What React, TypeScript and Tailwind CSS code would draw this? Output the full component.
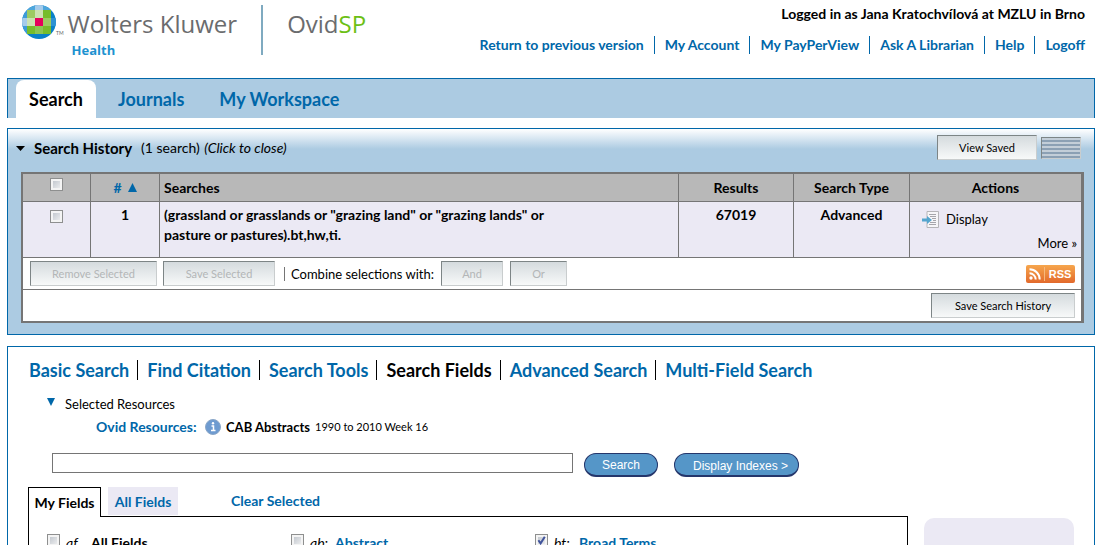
import type { ReactNode } from "react";

const accountLinks = ["Return to previous version", "My Account", "My PayPerView", "Ask A Librarian", "Help", "Logoff"];

const searchModes = ["Basic Search", "Find Citation", "Search Tools", "Search Fields", "Advanced Search", "Multi-Field Search"];

const fields = [
    { code: "af", sep: "", name: "All Fields", link: false, checked: false },
    { code: "ab", sep: ":", name: "Abstract", link: true, checked: false },
    { code: "bt", sep: ":", name: "Broad Terms", link: true, checked: true },
];

function Checkbox({ id, label, checked = false }: { id: string; label?: string; checked?: boolean }) {
    return (
        <span className="relative block size-[13px] shrink-0">
            <input
                id={id}
                type="checkbox"
                aria-label={label}
                defaultChecked={checked}
                className="peer block size-[13px] appearance-none border border-[#8e8f8f] bg-linear-to-br from-[#b9bfc7] to-[#f6f6f6] shadow-[inset_0_0_0_2px_#f4f4f4]"
            />
            <svg viewBox="0 0 13 13" className="pointer-events-none absolute inset-0 hidden size-[13px] peer-checked:block">
                <path d="M3.4 6.2 5.6 9.4 9.8 2.8" fill="none" stroke="#41549c" strokeWidth="2" />
            </svg>
        </span>
    );
}

function GreyButton({ children, className = "", disabled = false }: { children: ReactNode; className?: string; disabled?: boolean }) {
    return (
        <button
            type="button"
            disabled={disabled}
            className={`h-[25px] border border-t-[#7d8586] border-l-[#7d8586] border-r-[#c9cdce] border-b-[#c9cdce] bg-linear-to-b from-[#d5dbde] to-[#f7f9f9] text-[11px] leading-[14px] text-black disabled:text-[#b3b6b7] ${className}`}
        >
            {children}
        </button>
    );
}

function GlobeLogo() {
    return (
        <svg viewBox="0 0 34 34" className="size-[34px]" aria-hidden="true">
            <clipPath id="globe">
                <circle cx="17" cy="17" r="17" />
            </clipPath>
            <g clipPath="url(#globe)">
                <rect width="34" height="34" fill="#0a80c8" />
                <rect x="5" width="24" height="5" fill="#4da6dc" />
                <rect x="13" width="8" height="5" fill="#a5cbeb" />
                <rect y="5" width="5" height="24" fill="#3d9bd8" />
                <rect y="13" width="5" height="8" fill="#a5cbeb" />
                <rect x="29" y="13" width="5" height="8" fill="#2d92d3" />
                <rect x="5" y="5" width="24" height="24" fill="#76bd2b" />
                <rect x="5" y="5" width="8" height="8" fill="#9ccb62" />
                <rect x="13" y="5" width="8" height="8" fill="#cbe2b2" />
                <rect x="5" y="13" width="8" height="8" fill="#cbe2b2" />
                <rect x="21" y="13" width="8" height="8" fill="#9ccb62" />
                <rect x="13" y="21" width="8" height="8" fill="#8cc552" />
                <rect x="13" y="13" width="8" height="8" fill="#e5005b" />
            </g>
        </svg>
    );
}

function DisplayIcon() {
    return (
        <svg viewBox="0 0 17 17" className="size-[17px]" aria-hidden="true">
            <path d="M5 .5h11.500v16H5z" fill="#f6f6f8" stroke="#b5b5b8" />
            <path d="M7 3.500h7M8 5.500h6M10 7.500h4M11 9.500h3M8 11.500h6M7 13.500h7" stroke="#a6a6ab" />
            <path d="M0 7.500h5V5l5 4-5 4v-2.500H0z" fill="#54a5ce" />
        </svg>
    );
}

function RssBadge() {
    return (
        <a href="#" aria-label="RSS feed" className="flex h-[18px] w-[49px] items-center rounded-xs bg-linear-to-b from-[#f6a64d] to-[#e2692b] text-white">
            <svg viewBox="0 0 19 18" className="h-[18px] w-[19px]" aria-hidden="true">
                <circle cx="5" cy="13" r="1.700" fill="#fff" />
                <path d="M3.500 8.300a6.200 6.200 0 0 1 6.200 6.200M3.500 4.300a10.200 10.200 0 0 1 10.200 10.200" fill="none" stroke="#fff" strokeWidth="2" />
                <path d="M18.500 2v14" stroke="#f7b87c" />
            </svg>
            <span className="flex-1 text-center font-['Liberation_Sans'] text-[11px] leading-[18px] font-bold">RSS</span>
        </a>
    );
}

function Header() {
    return (
        <header className="flex h-[78px] shrink-0 justify-between pr-[10px] pl-[15px]">
            <div className="flex pt-[5px]">
                <GlobeLogo />
                <span className="mt-6 text-[5px] leading-[8px] text-[#666]">TM</span>
                <div className="pl-1">
                    <div className="font-['Open_Sans'] text-[24px] leading-[38px] text-[#6b6c6e]">Wolters Kluwer</div>
                    <div className="pl-1 font-['Open_Sans'] text-[13px] leading-[14px] font-bold text-[#1d92d0]">Health</div>
                </div>
                <div className="ml-6 h-[50px] w-[2px] bg-[#7faac0]" />
                <div className="ml-6 font-['Open_Sans'] text-[24px] leading-[38px] text-[#6b6c6e]">
                    Ovid<span className="text-[#6cc015]">SP</span>
                </div>
            </div>
            <div className="flex flex-col items-end pt-1 text-[14px] font-bold">
                <div className="leading-[20px]">Logged in as Jana Kratochvílová at MZLU in Brno</div>
                <nav className="mt-3 flex leading-[18px] text-[#0067a9]">
                    {accountLinks.map((link) => (
                        <a key={link} href="#" className="ml-[10px] border-l border-[#0067a9] pl-[10px] first:border-0">
                            {link}
                        </a>
                    ))}
                </nav>
            </div>
        </header>
    );
}

function SearchHistory() {
    const head = "h-7 border-b border-[#757575] bg-[#b8b8b8] text-[14px] font-bold";
    const cell = "h-14 border-b border-[#757575] bg-[#ebe9f4] align-top text-[14px] font-bold";

    return (
        <section className="mt-[10px] border border-[#0067a9] bg-[#accbe2] bg-linear-to-b from-white to-[#accbe2] to-[20px] pr-[10px] pb-[11px] pl-[13px]">
            <div className="flex h-[43px] items-start justify-between pt-[6px]">
                <div className="flex items-center gap-[9px] leading-[26px]">
                    <svg viewBox="0 0 9 5" className="-ml-[5px] h-[5px] w-[9px]" aria-hidden="true">
                        <path d="M0 0h9L4.500 5z" />
                    </svg>
                    <h2 className="text-[15px] font-bold">Search History</h2>
                    <span className="text-[14px]">
                        (1 search) <i className="pl-px">(Click to close)</i>
                    </span>
                </div>
                <div className="flex items-center gap-1 pr-[3px]">
                    <GreyButton className="w-[100px]">View Saved</GreyButton>
                    <button
                        type="button"
                        aria-label="Toggle view"
                        className="h-[22px] w-10 border border-t-[#7d8586] border-l-[#7d8586] border-r-[#c9cdce] border-b-[#c9cdce] bg-[repeating-linear-gradient(to_bottom,#c3ced8_0_2px,#8ba0b4_2px_4px)]"
                    />
                </div>
            </div>

            <table className="w-full table-fixed border-separate border-spacing-0 border-2 border-r-[3px] border-[#757575] bg-white text-[13px] leading-[20px]">
                <colgroup>
                    <col className="w-[68px]" />
                    <col className="w-[69px]" />
                    <col />
                    <col className="w-[115px]" />
                    <col className="w-[116px]" />
                    <col className="w-[171px]" />
                </colgroup>
                <thead>
                    <tr>
                        <th className={`${head} border-r align-top`}>
                            <div className="flex justify-center pt-1">
                                <Checkbox id="select-all" label="Select all searches" />
                            </div>
                        </th>
                        <th className={`${head} border-r`}>
                            <a href="#" className="flex items-center justify-center gap-[6px] text-[#0067a9]">
                                #
                                <svg viewBox="0 0 9 9" className="size-[9px]" aria-hidden="true">
                                    <path d="M4.500 0 9 9H0z" fill="#0067a9" />
                                </svg>
                            </a>
                        </th>
                        <th className={`${head} border-r pl-1 text-left`}>Searches</th>
                        <th className={`${head} border-r`}>Results</th>
                        <th className={`${head} border-r`}>Search Type</th>
                        <th className={head}>Actions</th>
                    </tr>
                </thead>
                <tbody>
                    <tr>
                        <td className={`${cell} border-r`}>
                            <div className="flex justify-center pt-2">
                                <Checkbox id="select-1" label="Select search 1" />
                            </div>
                        </td>
                        <td className={`${cell} border-r pt-[3px] text-center`}>1</td>
                        <td className={`${cell} border-r pt-[3px] pl-1`}>
                            <div className="max-w-[420px]">
                                (grassland or grasslands or "grazing land" or "grazing lands" or pasture or pastures).bt,hw,ti.
                            </div>
                        </td>
                        <td className={`${cell} border-r pt-[3px] text-center`}>67019</td>
                        <td className={`${cell} border-r pt-[3px] text-center`}>Advanced</td>
                        <td className="h-14 border-b border-[#757575] bg-[#ebe9f4] pt-[7px] pr-1 pl-3 align-top">
                            <a href="#" className="flex items-center gap-[7px]">
                                <DisplayIcon />
                                Display
                            </a>
                            <a href="#" className="mt-1 block text-right">
                                More »
                            </a>
                        </td>
                    </tr>
                    <tr>
                        <td colSpan={6} className="h-8 border-b border-[#757575] py-0 pr-[6px] pl-[7px]">
                            <div className="flex items-center">
                                <GreyButton disabled className="w-[127px]">Remove Selected</GreyButton>
                                <GreyButton disabled className="ml-[6px] w-[112px]">Save Selected</GreyButton>
                                <span className="ml-[9px] h-[14px] w-px bg-[#757575]" />
                                <span className="w-[156px] pl-[6px] whitespace-nowrap">Combine selections with:</span>
                                <GreyButton disabled className="w-[62px]">And</GreyButton>
                                <GreyButton disabled className="ml-[7px] w-[57px]">Or</GreyButton>
                                <div className="ml-auto">
                                    <RssBadge />
                                </div>
                            </div>
                        </td>
                    </tr>
                    <tr>
                        <td colSpan={6} className="h-[31px] px-[6px] py-0 text-right">
                            <div className="flex justify-end">
                                <GreyButton className="w-[144px]">Save Search History</GreyButton>
                            </div>
                        </td>
                    </tr>
                </tbody>
            </table>
        </section>
    );
}

function SearchPanel() {
    return (
        <section className="mt-[11px] flex-1 border border-b-0 border-[#0067a9] px-5 pt-[13px]">
            <nav className="flex pl-px text-[18px] leading-[20px] font-bold">
                {searchModes.map((mode) => (
                    <a
                        key={mode}
                        href="#"
                        className={`mr-2 border-l border-black pl-[9px] first:border-0 first:pl-0 ${mode === "Search Fields" ? "text-black" : "text-[#0067a9]"}`}
                    >
                        {mode}
                    </a>
                ))}
            </nav>

            <div className="mt-[14px] flex items-center gap-[10px] pl-[19px] text-[13px] leading-[20px]">
                <svg viewBox="0 0 8 8" className="mb-1 size-2" aria-hidden="true">
                    <path d="M0 0h8L4 8z" fill="#0067a9" />
                </svg>
                Selected Resources
            </div>
            <div className="mt-[3px] flex items-center pl-[68px] text-[13px] leading-[20px] font-bold">
                <a href="#" className="w-[109px] text-[14px] text-[#0067a9]">Ovid Resources:</a>
                <svg viewBox="0 0 16 16" className="size-4" aria-hidden="true">
                    <circle cx="8" cy="8" r="7.500" fill="#6e9bd0" stroke="#8ba7c8" />
                    <path d="M6.500 7h2v4.500M6 11.500h4.500" fill="none" stroke="#fff" strokeWidth="1.500" />
                    <circle cx="8" cy="4.200" r="1.200" fill="#fff" />
                </svg>
                <span className="pl-[5px]">CAB Abstracts</span>
                <span className="pl-[5px] text-[11px] font-normal">1990 to 2010 Week 16</span>
            </div>

            <form className="mt-[16px] flex items-start pl-6" onSubmit={(e) => e.preventDefault()}>
                <input type="text" aria-label="Search terms" className="h-5 w-[521px] border border-[#757575] bg-white px-1 text-[13px]" />
                <button
                    type="submit"
                    className="ml-[11px] h-6 w-[74px] rounded-full border border-b-2 border-[#25366b] bg-[#5596c8] font-['Liberation_Sans'] text-[12px] leading-[20px] text-white"
                >
                    Search
                </button>
                <button
                    type="button"
                    className="ml-4 h-6 w-[125px] rounded-full border border-b-2 border-[#25366b] bg-[#5596c8] pt-1 pl-2 font-['Liberation_Sans'] text-[12px] leading-[17px] text-white"
                >
                    Display Indexes &gt;
                </button>
            </form>

            <div className="mt-[10px] flex items-start gap-4">
                <div className="min-w-0 flex-1">
                    <div className="flex items-start text-[14px] font-bold">
                        <button type="button" className="relative z-10 -mb-px h-[30px] w-[73px] border border-b-0 border-black bg-white font-bold">
                            My Fields
                        </button>
                        <button type="button" className="ml-[7px] h-7 w-[70px] bg-[#ebe9f4] font-bold text-[#0067a9]">
                            All Fields
                        </button>
                        <a href="#" className="ml-[53px] leading-[28px] text-[#0067a9]">
                            Clear Selected
                        </a>
                    </div>
                    <div className="flex h-[120px] border border-black pt-[17px] pl-[18px] text-[14px] leading-[18px] font-bold">
                        {fields.map((f) => (
                            <div key={f.code} className="flex w-[244px] items-start gap-[6px]">
                                <Checkbox id={f.code} checked={f.checked} />
                                <label htmlFor={f.code} className="flex gap-2">
                                    <i className="w-[17px] font-normal">{f.code}{f.sep}</i>
                                    {f.link ? <a href="#" className="text-[#0067a9]">{f.name}</a> : f.name}
                                </label>
                            </div>
                        ))}
                    </div>
                </div>
                <aside className="mt-[31px] h-[120px] w-[150px] rounded-t-[10px] bg-[#ebe9f4]" />
            </div>
        </section>
    );
}

export default function App() {
    return (
        <div className="flex h-screen flex-col overflow-hidden bg-white pr-[6px] pl-[7px] font-['Lato',sans-serif] text-black">
            <Header />
            <nav className="flex h-10 shrink-0 border border-b-0 border-[#0067a9] bg-[#accbe2] pt-px pl-2 text-[18px] leading-[38px] font-bold text-[#0067a9]">
                <a href="#" className="w-20 rounded-t-lg bg-white text-center text-black">Search</a>
                <a href="#" className="ml-[22px]">Journals</a>
                <a href="#" className="ml-[35px]">My Workspace</a>
            </nav>
            <SearchHistory />
            <SearchPanel />
        </div>
    );
}
